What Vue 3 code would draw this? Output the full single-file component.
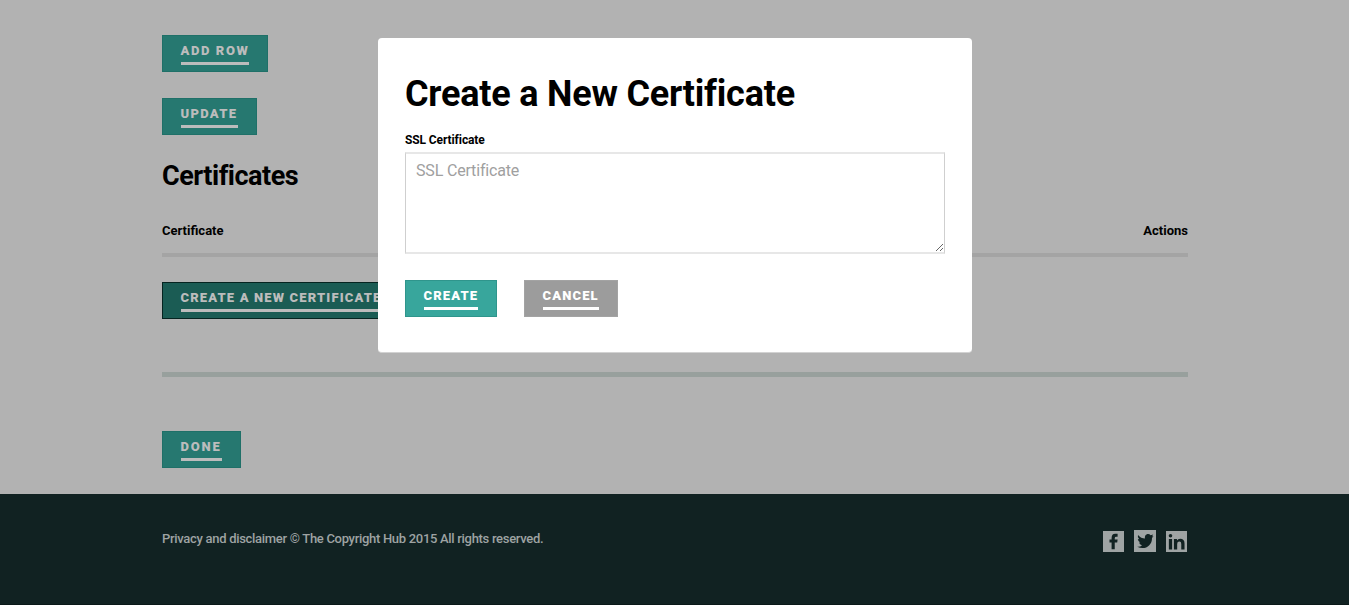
<script setup>
const socials = [
  { name: 'Facebook', d: 'M9 19v-7H6.800V9H9V7.500Q9 3 12.800 3H15.300v3h-1.500q-1.500 0-1.500 1.500V9h3l-.4 3H12.300v7z' },
  { name: 'Twitter', d: 'M4 5Q7 8.500 11 8.600C10.200 4 14.800 3 16.600 5.200L19.200 4.400 18 6.400 19.500 6 18 8C18.200 16 10.500 20.500 3.200 16.800Q6.500 17 8 15.300 5.500 14.800 5 12.600L6.300 12.500Q4 11.300 3.800 8.900L5.200 9.200Q3.200 7 4 5Z' },
  { name: 'LinkedIn', d: 'M3 8.500h3.400v11H3zM4.700 3.100a1.900 1.900 0 1 1 0 3.800a1.900 1.900 0 0 1 0-3.800M8.300 8.500h3.200v1.500Q12.500 8.200 14.800 8.200 19.400 8.200 19.400 13V19.500h-3.400v-6Q16 11 14 11 11.700 11 11.700 13.500v6H8.300z' },
]
</script>

<template>
  <div class="page">
    <main class="content">
      <button class="btn add"><span>ADD ROW</span></button>
      <button class="btn update"><span>UPDATE</span></button>
      <h2><span>Certificates</span></h2>
      <div class="table-head"><b>Certificate</b><b>Actions</b></div>
      <div class="new-row"><button class="btn active new"><span>CREATE A NEW CERTIFICATE</span></button></div>
      <button class="btn done"><span>DONE</span></button>
    </main>
    <footer>
      <div class="footer-inner">
        <p>Privacy and disclaimer © The Copyright Hub 2015 All rights reserved.</p>
        <nav>
          <a v-for="s in socials" :key="s.name" :aria-label="s.name">
            <svg viewBox="0 0 22 22"><path :d="s.d" /></svg>
          </a>
        </nav>
      </div>
    </footer>
    <section class="modal" role="dialog">
      <h1>Create a New Certificate</h1>
      <label>SSL Certificate</label>
      <textarea placeholder="SSL Certificate"></textarea>
      <div class="actions">
        <button class="btn light create"><span>CREATE</span></button>
        <button class="btn light cancel"><span>CANCEL</span></button>
      </div>
    </section>
  </div>
</template>

<style>
body { margin: 0; overflow: hidden; }
</style>

<style scoped>
* { box-sizing: border-box; }
.page { position: relative; width: 1349px; height: 605px; background: #b2b2b2; font-family: Roboto, sans-serif; color: #000; overflow: hidden; }
.content { width: 1026px; height: 494px; margin-left: 162px; padding-top: 35px; display: flex; flex-direction: column; align-items: flex-start; }
.btn { height: 37px; padding: 6px 18px 0; border: 1px solid #1f7068; border-radius: 0; background: #267870; color: #bcbcbc; font: 900 13px/17px Roboto, sans-serif; letter-spacing: 1.150px; text-align: left; white-space: nowrap; display: flex; align-items: flex-start; }
.btn span { display: block; width: 100%; height: 23px; border-bottom: 3px solid #bcbcbc; text-indent: -0.500px; }
.add { width: 106px; letter-spacing: 1.600px; }
.update { width: 95px; margin-top: 26px; letter-spacing: 1.300px; }
.new { width: 262px; }
.done { width: 79px; margin-top: 54px; letter-spacing: 1.800px; }
.create { width: 92px; }
.cancel { width: 94px; }
.active { background: #1b5c54; border-color: #062420; }
.light { background: #38a69c; border-color: #2f958c; color: #fff; }
.light span { border-color: #fff; }
.light.cancel { background: #9c9c9c; border-color: #a3a3a3; }
h2 { margin: 25px 0 0; font-size: 27px; line-height: 32px; letter-spacing: -0.480px; }
.table-head { width: 100%; height: 38px; margin-top: 27px; padding-top: 3px; border-bottom: 4px solid #a4a4a4; display: flex; justify-content: space-between; font-size: 13px; line-height: 18px; }
.new-row { width: 100%; height: 120px; padding-top: 25px; border-bottom: 5px solid #98a09d; }
footer { height: 111px; background: #112222; border-bottom: 1px solid #0b1919; }
.footer-inner { margin: 0 162px; width: 1026px; padding-top: 35px; display: flex; justify-content: space-between; color: #9ea3a3; }
p { margin: 1px 0 0; font-size: 13px; line-height: 18px; font-weight: 500; letter-spacing: -0.300px; white-space: nowrap; }
nav { display: flex; gap: 10px; margin-right: 1px; }
nav a { width: 21px; height: 21px; margin-top: 2px; background: #9fa4a4; }
nav a:nth-child(2) { width: 22px; height: 22px; margin-top: 1px; }
nav svg { display: block; width: 100%; height: 100%; fill: #112222; }
.modal { position: absolute; left: 378px; top: 38px; width: 594px; height: 315px; padding: 33px 27px 0; background: #fff; border-radius: 4px; border-bottom: 1px solid #d2d2d2; }
h1 { margin: 0; font-size: 36px; line-height: 46px; letter-spacing: -0.210px; white-space: nowrap; }
label { display: block; margin-top: 15px; font-size: 12px; line-height: 16px; font-weight: 700; letter-spacing: -0.100px; }
textarea { display: block; width: 540px; height: 102px; margin-top: 4px; padding: 6px 10px; border: 1px solid #cfcfcf; border-top: 2px solid #e7e7e7; border-bottom: 2px solid #e7e7e7; outline: 0; font: 16px/22px Roboto, sans-serif; letter-spacing: -0.170px; resize: both; }
textarea::placeholder { color: #a0a0a0; }
.actions { display: flex; gap: 27px; margin-top: 26px; }
</style>
